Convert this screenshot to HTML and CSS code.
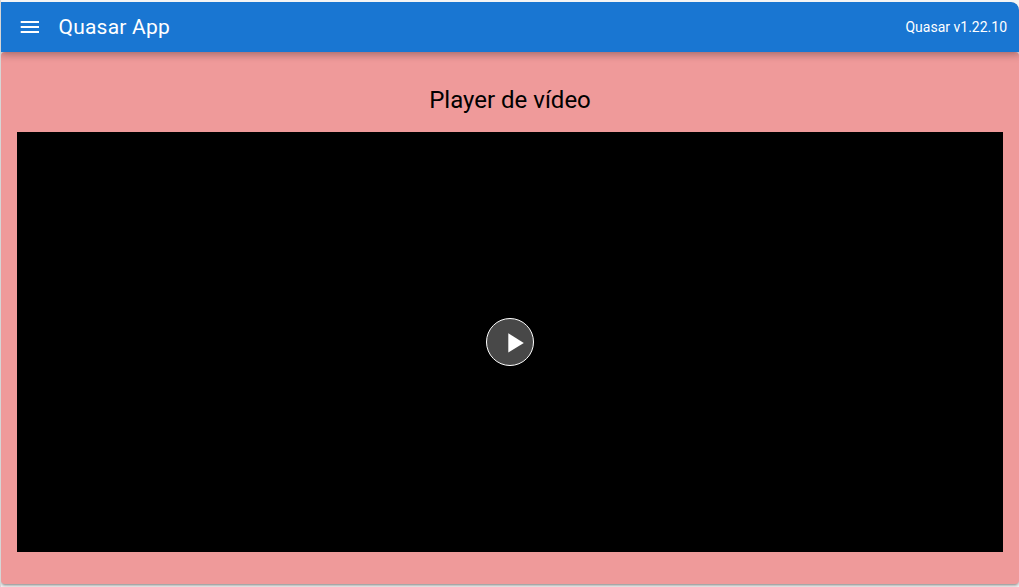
FILE: index.html
```html
<!DOCTYPE html>
<html lang="pt-BR">
<head>
<meta charset="utf-8">
<title>Quasar App</title>
<link rel="stylesheet" href="styles.css">
</head>
<body>
<div class="layout">
  <header class="toolbar">
    <button class="menu" aria-label="Menu">
      <svg width="24" height="24" viewBox="0 0 24 24" fill="currentColor"><path d="M2.7 6H21v2H2.7zM2.7 11H21v2H2.7zM2.7 16H21v2H2.7z"/></svg>
    </button>
    <div class="title">Quasar App</div>
    <div class="version">Quasar v1.22.10</div>
  </header>
  <main class="card">
    <h1 class="heading">Player de vídeo</h1>
    <div class="player">
      <button class="play" aria-label="Play">
        <svg width="48" height="48" viewBox="0 0 48 48"><circle cx="24" cy="24" r="23.5" fill="#484848" stroke="#fff"/><path d="M22.3 15.2v19.4L37.8 24.9z" fill="#fff"/></svg>
      </button>
    </div>
  </main>
</div>
</body>
</html>
```
FILE: styles.css
```css
* {
  box-sizing: border-box;
}

body {
  margin: 0;
  height: 587px;
  overflow: hidden;
  background: #f4f4f4;
  border-left: 1px solid #d6d6d6;
  font-family: Roboto, "Liberation Sans", sans-serif;
}

.layout {
  padding-top: 2px;
}

.toolbar {
  position: relative;
  z-index: 1;
  display: flex;
  align-items: center;
  height: 50px;
  padding: 0 12px 0 17px;
  color: #fff;
  background: #1976d2;
  border-top-right-radius: 8px;
  box-shadow: 0 0 10px 2px rgba(0, 0, 0, .2), 0 0 10px rgba(0, 0, 0, .24);
  clip-path: inset(0 0 -20px 0 round 0 8px 0 0);
}

.menu,
.play {
  display: block;
  padding: 0;
  border: 0;
  background: none;
  color: inherit;
}

.menu svg,
.play svg {
  display: block;
}

.title {
  flex: 1;
  padding-left: 16.5px;
  font-size: 21px;
  letter-spacing: .21px;
}

.version {
  font-size: 14px;
}

.card {
  height: 532px;
  padding: 32px 16px;
  background: #ef9a9a;
  border-radius: 4px;
  box-shadow: 0 1px 5px rgba(0, 0, 0, .2), 0 2px 2px rgba(0, 0, 0, .14), 0 3px 1px -2px rgba(0, 0, 0, .12);
}

.heading {
  margin: 0 0 16px;
  font-size: 24px;
  font-weight: 400;
  line-height: 32px;
  text-align: center;
  color: #000;
}

.player {
  display: flex;
  align-items: center;
  justify-content: center;
  height: 420px;
  background: #000;
}
```
